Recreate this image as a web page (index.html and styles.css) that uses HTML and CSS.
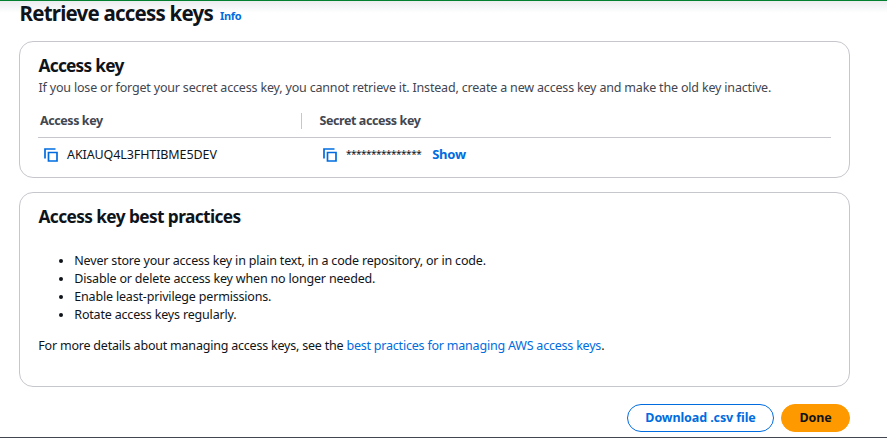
FILE: index.html
```html
<!DOCTYPE html>
<html lang="en">
<head>
<meta charset="utf-8">
<title>Retrieve access keys</title>
<link rel="stylesheet" href="styles.css">
</head>
<body>
<main class="page">
  <header class="page-header">
    <h1 class="title">Retrieve access keys</h1>
    <a class="info">Info</a>
  </header>
  <section class="card key-card">
    <h2 class="heading">Access key</h2>
    <p class="description">If you lose or forget your secret access key, you cannot retrieve it. Instead, create a new access key and make the old key inactive.</p>
    <div class="row head">
      <div class="cell first"><span class="label">Access key</span></div>
      <div class="cell"><span class="label secret">Secret access key</span></div>
    </div>
    <div class="row values">
      <div class="cell first">
        <svg class="copy" viewBox="0 0 16 16"><path d="M2 11.5V2h10.5M5.5 5.5h8.5v8.5H5.5z"/></svg>
        <span class="key">AKIAUQ4L3FHTIBME5DEV</span>
      </div>
      <div class="cell">
        <svg class="copy" viewBox="0 0 16 16"><path d="M2 11.5V2h10.5M5.5 5.5h8.5v8.5H5.5z"/></svg>
        <span class="mask">***************</span>
        <a class="show">Show</a>
      </div>
    </div>
  </section>
  <section class="card practices">
    <h2 class="heading best">Access key best practices</h2>
    <ul class="list">
      <li>Never store your access key in plain text, in a code repository, or in code.</li>
      <li>Disable or delete access key when no longer needed.</li>
      <li>Enable least-privilege permissions.</li>
      <li>Rotate access keys regularly.</li>
    </ul>
    <p class="more">For more details about managing access keys, see the <a class="link">best practices for managing AWS access keys</a>.</p>
  </section>
  <footer class="actions">
    <button class="btn download">Download .csv file</button>
    <button class="btn done">Done</button>
  </footer>
</main>
</body>
</html>
```
FILE: styles.css
```css
* { box-sizing: border-box; }
body {
  margin: 0;
  height: 438px;
  overflow: hidden;
  border-top: 1px solid #037f2f;
  border-bottom: 1px solid #424650;
  background: linear-gradient(#e9ebee, #fff 13px);
  color: #0f141a;
  font: 12.5px/18px "Noto Sans", "Open Sans", sans-serif;
}
h1, h2, p, ul { margin: 0; }
a { color: #006ce0; }
.page { width: 850px; padding-left: 19px; }
.page-header { display: flex; align-items: flex-start; gap: 7px; height: 40px; padding-left: 0.5px; white-space: nowrap; }
.title { font-size: 20.5px; line-height: 24px; font-weight: 700; letter-spacing: -0.78px; }
.info { margin-top: 6px; font-size: 11px; font-weight: 700; letter-spacing: -0.3px; }
.card { border: 1px solid #c6c6cd; border-radius: 14px; background: #fff; padding: 0 18px; white-space: nowrap; }
.key-card { height: 137px; padding-top: 13px; }
.heading { padding-left: 0.5px; font-size: 17.3px; line-height: 22px; font-weight: 700; letter-spacing: -0.75px; }
.best { letter-spacing: -0.6px; }
.description { margin-top: 2px; padding-left: 0.5px; color: #424650; letter-spacing: -0.18px; }
.row { display: grid; grid-template-columns: 264px 1fr; }
.head { height: 32px; margin-top: 9px; border-bottom: 1px solid #c6c6cd; padding-top: 7px; }
.head .cell { height: 16px; line-height: 16px; padding-left: 17.5px; }
.head .first { padding-left: 2px; border-right: 1px solid #c6c6cd; }
.label { color: #424650; font-weight: 700; letter-spacing: -0.42px; }
.values { padding-top: 8px; }
.values .cell { display: flex; align-items: center; padding-left: 20px; }
.values .first { padding-left: 5px; }
.copy { width: 16px; height: 16px; fill: none; stroke: #006ce0; stroke-width: 1.7; }
.key, .mask { margin-left: 8px; }
.key { letter-spacing: -0.1px; }
.mask { padding-bottom: 2px; line-height: 16px; font-size: 10px; letter-spacing: -0.5px; }
.show { margin-left: 11px; padding-bottom: 2px; line-height: 16px; font-size: 13px; font-weight: 700; letter-spacing: -0.2px; }
.practices { height: 195px; margin-top: 14px; padding-top: 13px; }
.list { padding: 24px 0 0 36.3px; letter-spacing: -0.18px; }
.more { margin-top: 13px; padding-left: 0.3px; letter-spacing: -0.21px; }
.actions { display: flex; justify-content: flex-end; gap: 7px; margin-top: 17px; }
.btn { height: 28px; border: 1px solid #006ce0; border-radius: 14px; padding: 0; background: #fff; color: #006ce0; font: 700 12.5px/18px "Noto Sans", sans-serif; letter-spacing: -0.1px; white-space: nowrap; }
.download { width: 147px; }
.done { width: 69px; background: #f90; border-color: #f90; color: #0f141a; }
```
